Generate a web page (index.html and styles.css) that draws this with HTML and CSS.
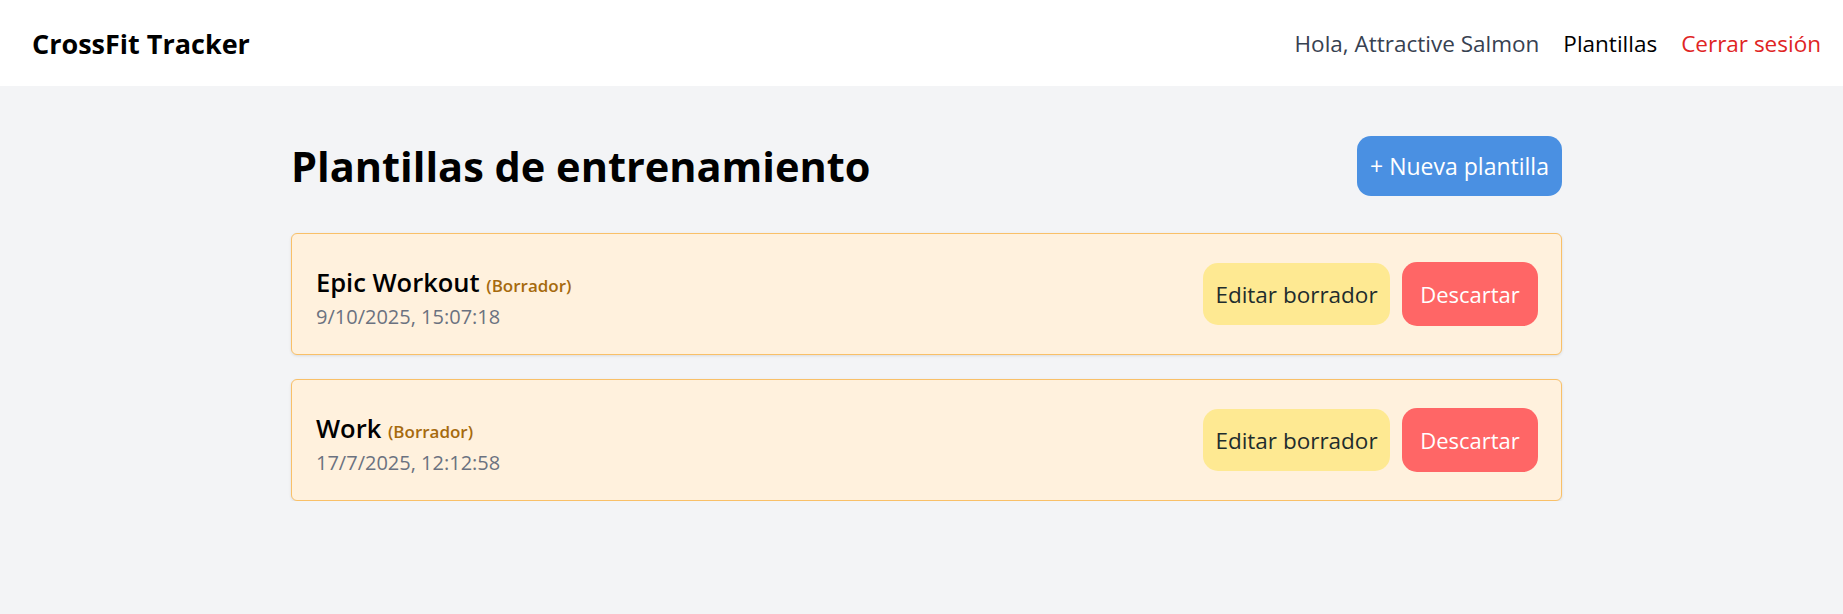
FILE: index.html
```html
<!DOCTYPE html>
<html lang="es">
<head>
<meta charset="utf-8">
<title>CrossFit Tracker</title>
<link rel="stylesheet" href="styles.css">
</head>
<body>
<nav class="navbar">
  <div class="brand">CrossFit Tracker</div>
  <div class="nav-links">
    <span class="greeting">Hola, Attractive Salmon</span>
    <a class="nav-link" href="#">Plantillas</a>
    <a class="nav-link logout" href="#">Cerrar sesión</a>
  </div>
</nav>
<main class="content">
  <div class="page-header">
    <h1 class="page-title">Plantillas de entrenamiento</h1>
    <button class="btn btn-primary">+ Nueva plantilla</button>
  </div>
  <div class="template-list">
    <div class="card">
      <div class="card-info">
        <div class="card-title">Epic Workout <span class="draft">(Borrador)</span></div>
        <div class="card-date">9/10/2025, 15:07:18</div>
      </div>
      <div class="card-actions">
        <button class="btn btn-edit">Editar borrador</button>
        <button class="btn btn-discard">Descartar</button>
      </div>
    </div>
    <div class="card">
      <div class="card-info">
        <div class="card-title">Work <span class="draft">(Borrador)</span></div>
        <div class="card-date">17/7/2025, 12:12:58</div>
      </div>
      <div class="card-actions">
        <button class="btn btn-edit">Editar borrador</button>
        <button class="btn btn-discard">Descartar</button>
      </div>
    </div>
  </div>
</main>
</body>
</html>
```

FILE: styles.css
```css
* { box-sizing: border-box; }
body {
  margin: 0;
  background: #f3f4f6;
  font-family: "Open Sans", "Noto Sans", sans-serif;
  color: #000;
}
.navbar {
  height: 86px;
  background: #fff;
  display: flex;
  align-items: center;
  justify-content: space-between;
  padding: 0 22px 0 32px;
}
.brand {
  font-size: 27px;
  font-weight: 700;
}
.nav-links {
  display: flex;
  align-items: center;
  gap: 24px;
  font-size: 22.5px;
}
.greeting { color: #374151; }
.nav-link { color: #000; text-decoration: none; }
.nav-link.logout { color: #e02424; }
.content {
  width: 1271px;
  margin-left: 291px;
  padding-top: 50px;
}
.page-header {
  display: flex;
  align-items: center;
  justify-content: space-between;
  height: 60px;
  margin-bottom: 37px;
}
.page-title {
  margin: 0;
  font-size: 41.5px;
  font-weight: 700;
}
.btn {
  border: none;
  font-family: inherit;
  cursor: pointer;
}
.btn-primary {
  width: 205px;
  height: 60px;
  background: #4a90e2;
  color: #fff;
  font-size: 23px;
  border-radius: 14px;
}
.template-list {
  display: flex;
  flex-direction: column;
  gap: 24px;
}
.card {
  height: 122px;
  background: #fff1dd;
  border: 1px solid #f9c068;
  border-radius: 6px;
  box-shadow: 0 1px 3px rgba(0,0,0,0.1);
  display: flex;
  align-items: center;
  justify-content: space-between;
  padding: 0 23px 0 24px;
}
.card-info {
  margin-top: 7px;
}
.card-title {
  font-size: 25.5px;
  font-weight: 600;
  line-height: 34px;
}
.draft {
  font-size: 17px;
  color: #a66a0d;
  font-weight: 600;
}
.card-date {
  font-size: 20px;
  color: #6b7280;
  line-height: 28px;
}
.card-actions {
  display: flex;
  align-items: center;
  gap: 12px;
}
.btn-edit {
  width: 187px;
  height: 62px;
  background: #fee992;
  color: #1f2d2d;
  font-size: 22.5px;
  border-radius: 15px;
}
.btn-discard {
  width: 136px;
  height: 64px;
  background: #ff6666;
  color: #fff;
  font-size: 22px;
  border-radius: 15px;
}
```
